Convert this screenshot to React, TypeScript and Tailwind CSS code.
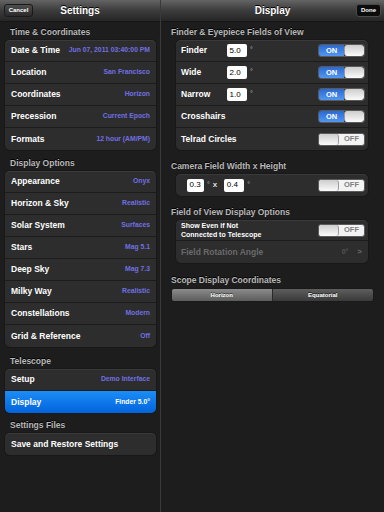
import React from "react";

const Toggle = ({ on }: { on: boolean }) =>
  on ? (
    <div className="flex h-[13px] w-[47px] overflow-hidden rounded-[3px] border border-[#5a5a5a]">
      <div className="flex flex-1 items-center justify-center bg-gradient-to-b from-[#2a68d4] to-[#5297ef] text-[7.5px] font-bold text-white">
        ON
      </div>
      <div className="w-[20px] rounded-[3px] border-l border-[#9a9a9a] bg-gradient-to-b from-[#cdcdcd] to-[#fbfbfb]" />
    </div>
  ) : (
    <div className="flex h-[13px] w-[47px] overflow-hidden rounded-[3px] border border-[#5a5a5a] bg-[#f3f3f3]">
      <div className="w-[20px] rounded-[3px] border-r border-[#9a9a9a] bg-gradient-to-b from-[#cdcdcd] to-[#fbfbfb]" />
      <div className="flex flex-1 items-center justify-center text-[7.5px] font-bold text-[#808080]">
        OFF
      </div>
    </div>
  );

const Box = ({ v, w = "w-[20px]" }: { v: string; w?: string }) => (
  <div
    className={`flex h-[13px] ${w} items-center rounded-[2px] bg-white pl-[2.5px] text-[8px] font-normal text-black`}
  >
    {v}
  </div>
);

const Header = ({ text, h, pl }: { text: string; h: string; pl: string }) => (
  <div className={`flex ${h} items-end pb-[3px] ${pl}`}>
    <span className="text-[8.5px] leading-[10px] font-bold text-[#b9b9b9] [text-shadow:0_-1px_0_#000]">
      {text}
    </span>
  </div>
);

const LRow = ({
  label,
  value,
  last,
  selected,
}: {
  label: string;
  value?: string;
  last?: boolean;
  selected?: boolean;
}) => (
  <div
    className={`flex h-[22px] items-center justify-between pl-[6px] pr-[6px] ${
      last ? "" : "border-b border-[#1c1c1c]"
    } ${selected ? "bg-gradient-to-b from-[#1c8df6] to-[#0463dc]" : ""}`}
  >
    <span className="text-[8.5px] font-bold text-white">{label}</span>
    {value && (
      <span
        className={`text-[6.8px] font-bold ${selected ? "text-white" : "text-[#7070e2]"}`}
      >
        {value}
      </span>
    )}
  </div>
);

const Group = ({ children, cls }: { children: React.ReactNode; cls: string }) => (
  <div
    className={`${cls} overflow-hidden rounded-[5px] bg-[#2d2d2d] shadow-[0_0_0_1px_#181818,inset_0_1px_0_#3a3a3a]`}
  >
    {children}
  </div>
);

const RRow = ({
  label,
  value,
  on,
  last,
}: {
  label: string;
  value?: string;
  on: boolean;
  last?: boolean;
}) => (
  <div
    className={`flex h-[22px] items-center pl-[5px] pr-[3px] ${
      last ? "" : "border-b border-[#1c1c1c]"
    }`}
  >
    <span className="w-[46px] shrink-0 text-[8.5px] font-bold whitespace-nowrap text-white">
      {label}
    </span>
    {value && (
      <>
        <Box v={value} />
        <span className="ml-[3px] text-[7px] text-[#bbb]">°</span>
      </>
    )}
    <div className="ml-auto">
      <Toggle on={on} />
    </div>
  </div>
);

export default function App() {
  return (
    <div className="flex h-[512px] w-[384px] overflow-hidden bg-[#1d1d1d] font-['Liberation_Sans',Arial,sans-serif]">
      {/* Left panel */}
      <div className="flex w-[161px] shrink-0 flex-col border-r border-[#3a3a3a]">
        <div className="relative flex h-[22px] items-center justify-center border-b border-[#161616] bg-gradient-to-b from-[#646464] via-[#3c3c3c] to-[#262626]">
          <div className="absolute left-[4px] top-[4px] flex h-[13px] w-[29px] items-center justify-center rounded-[3px] border border-[#1a1a1a] bg-gradient-to-b from-[#4e4e4e] to-[#2a2a2a] text-[6px] font-bold text-white">
            Cancel
          </div>
          <span className="text-[10px] font-bold text-white [text-shadow:0_-1px_0_#000]">Settings</span>
        </div>
        <Header text="Time & Coordinates" h="h-[18px]" pl="pl-[10px]" />
        <Group cls="ml-[5px] mr-[4px]">
          <LRow label="Date & Time" value="Jun 07, 2011  03:40:00 PM" />
          <LRow label="Location" value="San Francisco" />
          <LRow label="Coordinates" value="Horizon" />
          <LRow label="Precession" value="Current Epoch" />
          <LRow label="Formats" value="12 hour (AM/PM)" last />
        </Group>
        <Header text="Display Options" h="h-[21px]" pl="pl-[10px]" />
        <Group cls="ml-[5px] mr-[4px]">
          <LRow label="Appearance" value="Onyx" />
          <LRow label="Horizon & Sky" value="Realistic" />
          <LRow label="Solar System" value="Surfaces" />
          <LRow label="Stars" value="Mag 5.1" />
          <LRow label="Deep Sky" value="Mag 7.3" />
          <LRow label="Milky Way" value="Realistic" />
          <LRow label="Constellations" value="Modern" />
          <LRow label="Grid & Reference" value="Off" last />
        </Group>
        <Header text="Telescope" h="h-[22px]" pl="pl-[10px]" />
        <Group cls="ml-[5px] mr-[4px]">
          <LRow label="Setup" value="Demo Interface" />
          <LRow label="Display" value="Finder 5.0°" last selected />
        </Group>
        <Header text="Settings Files" h="h-[20px]" pl="pl-[10px]" />
        <Group cls="ml-[5px] mr-[4px]">
          <LRow label="Save and Restore Settings" last />
        </Group>
      </div>

      {/* Right panel */}
      <div className="flex flex-1 flex-col">
        <div className="relative flex h-[22px] items-center justify-center border-b border-[#161616] bg-gradient-to-b from-[#646464] via-[#3c3c3c] to-[#262626]">
          <span className="text-[10px] font-bold text-white [text-shadow:0_-1px_0_#000]">Display</span>
          <div className="absolute right-[3px] top-[4px] flex h-[13px] w-[25px] items-center justify-center rounded-[3px] border border-[#4a4a4a] bg-[#0c0c0c] text-[6px] font-bold text-white">
            Done
          </div>
        </div>
        <Header text="Finder & Eyepiece Fields of View" h="h-[18px]" pl="pl-[10px]" />
        <Group cls="ml-[15px] mr-[16px]">
          <RRow label="Finder" value="5.0" on />
          <RRow label="Wide" value="2.0" on />
          <RRow label="Narrow" value="1.0" on />
          <RRow label="Crosshairs" on />
          <RRow label="Telrad Circles" on={false} last />
        </Group>
        <Header text="Camera Field Width x Height" h="h-[24px]" pl="pl-[10px]" />
        <Group cls="ml-[15px] mr-[16px]">
          <div className="flex h-[22px] items-center pl-[11px] pr-[3px]">
            <Box v="0.3" w="w-[17px]" />
            <span className="ml-[3px] text-[7px] text-[#bbb]">°</span>
            <span className="ml-[3px] text-[8px] font-bold text-[#ddd]">x</span>
            <div className="ml-[7px]">
              <Box v="0.4" />
            </div>
            <span className="ml-[3px] text-[7px] text-[#bbb]">°</span>
            <div className="ml-auto">
              <Toggle on={false} />
            </div>
          </div>
        </Group>
        <Header text="Field of View Display Options" h="h-[24px]" pl="pl-[10px]" />
        <Group cls="ml-[15px] mr-[16px]">
          <div className="flex h-[21px] items-center border-b border-[#1c1c1c] pl-[5px] pr-[3px]">
            <span className="text-[7px] leading-[9px] font-bold text-white">
              Show Even if Not
              <br />
              Connected to Telescope
            </span>
            <div className="ml-auto">
              <Toggle on={false} />
            </div>
          </div>
          <div className="flex h-[22px] items-center pl-[5px] pr-[6px]">
            <span className="text-[8.5px] font-bold text-[#6a6a6a]">Field Rotation Angle</span>
            <span className="ml-auto text-[7px] font-bold text-[#555]">0°</span>
            <span className="ml-[9px] text-[8px] font-bold text-[#6a6a6a]">&gt;</span>
          </div>
        </Group>
        <Header text="Scope Display Coordinates" h="h-[25px]" pl="pl-[10px]" />
        <div className="mx-[10px] flex h-[14px] overflow-hidden rounded-[3px] border border-[#1a1a1a] text-[6px] font-bold text-white">
          <div className="flex w-1/2 items-center justify-center border-r border-[#2a2a2a] bg-gradient-to-b from-[#8c8c8c] to-[#5c5c5c] [text-shadow:0_-1px_0_#333]">
            Horizon
          </div>
          <div className="flex w-1/2 items-center justify-center bg-gradient-to-b from-[#5e5e5e] to-[#3a3a3a] [text-shadow:0_-1px_0_#222]">
            Equatorial
          </div>
        </div>
      </div>
    </div>
  );
}
